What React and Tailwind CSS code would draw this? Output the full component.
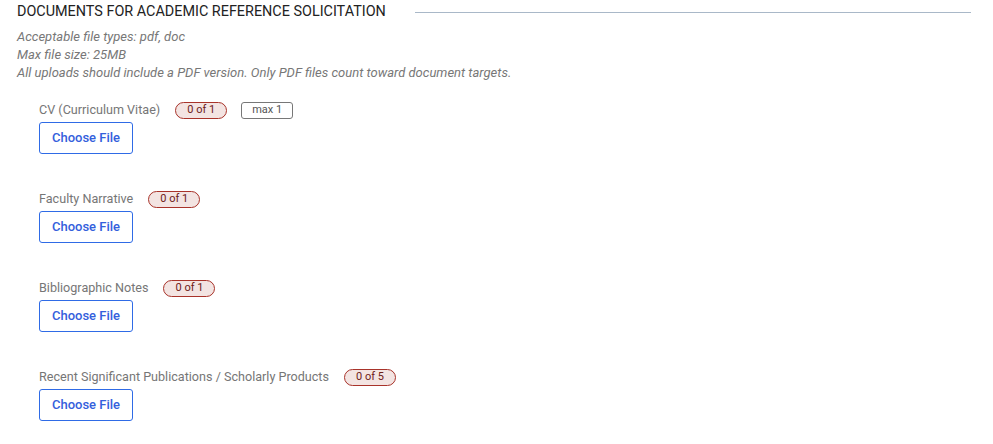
import React from "react";

const docs = [
  { label: "CV (Curriculum Vitae)", count: "0 of 1", max: "max 1" },
  { label: "Faculty Narrative", count: "0 of 1" },
  { label: "Bibliographic Notes", count: "0 of 1" },
  { label: "Recent Significant Publications / Scholarly Products", count: "0 of 5" },
];

function DocRow({ label, count, max }) {
  return (
    <div className="mb-[36px]">
      <div className="flex items-center h-[18px]">
        <span className="text-[12.6px] text-[#767676]">{label}</span>
        <span className="ml-[15px] h-[17px] w-[52px] flex items-center justify-center rounded-full border border-[#a8332a] bg-[#f3e4e2] text-[11px] text-[#6e2019]">
          {count}
        </span>
        {max && (
          <span className="ml-[14px] h-[17px] w-[52px] flex items-center justify-center rounded-[3px] border border-[#777] text-[11px] text-[#555]">
            {max}
          </span>
        )}
      </div>
      <button className="mt-[3px] w-[94px] h-[32px] rounded-[3px] border border-[#2f6be6] bg-white text-[13px] font-medium text-[#3460dc]">
        Choose File
      </button>
    </div>
  );
}

export default function App() {
  return (
    <div
      className="bg-white w-[993px] h-[444px] overflow-hidden pl-[17px] pr-[22px] pt-[3px]"
      style={{ fontFamily: "Roboto, 'Liberation Sans', sans-serif" }}
    >
      <div className="flex items-center h-[18px]">
        <h2 className="text-[14.4px] text-[#222] whitespace-nowrap leading-none">
          DOCUMENTS FOR ACADEMIC REFERENCE SOLICITATION
        </h2>
        <div className="flex-1 ml-[29px] h-px bg-[#a9b8c8]" />
      </div>
      <div className="mt-[7px] text-[13px] italic text-[#777] leading-[18px]">
        <p>Acceptable file types: pdf, doc</p>
        <p>Max file size: 25MB</p>
        <p>All uploads should include a PDF version. Only PDF files count toward document targets.</p>
      </div>
      <div className="mt-[19px] pl-[22px]">
        {docs.map((d) => (
          <DocRow key={d.label} {...d} />
        ))}
      </div>
    </div>
  );
}
